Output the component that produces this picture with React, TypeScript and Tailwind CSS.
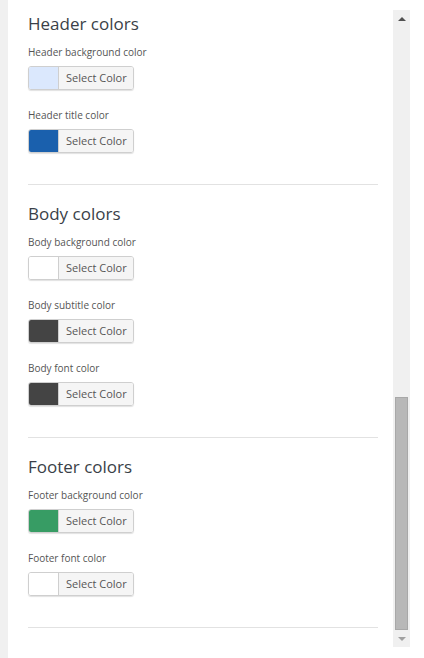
import React from "react";

type Field = { label: string; color: string };
type Section = { title: string; fields: Field[] };

const sections: Section[] = [
  {
    title: "Header colors",
    fields: [
      { label: "Header background color", color: "#dbe8fd" },
      { label: "Header title color", color: "#1a60ad" },
    ],
  },
  {
    title: "Body colors",
    fields: [
      { label: "Body background color", color: "#ffffff" },
      { label: "Body subtitle color", color: "#444444" },
      { label: "Body font color", color: "#444444" },
    ],
  },
  {
    title: "Footer colors",
    fields: [
      { label: "Footer background color", color: "#379c64" },
      { label: "Footer font color", color: "#ffffff" },
    ],
  },
];

function ColorButton({ color }: { color: string }) {
  return (
    <div className="mt-[7px] flex h-6 w-[106px] overflow-hidden rounded-[3px] border border-[#cfcfcf] shadow-[0_1px_1px_rgba(0,0,0,0.12)]">
      <div className="w-[30px] border-r border-[#cfcfcf]" style={{ backgroundColor: color }} />
      <div className="flex flex-1 items-center bg-[#f5f5f5] pl-[7px] text-[11px] text-[#555]">
        Select Color
      </div>
    </div>
  );
}

export default function App() {
  return (
    <div
      className="flex h-[658px] w-[424px] bg-white"
      style={{ fontFamily: '"Open Sans", sans-serif' }}
    >
      {/* left strip */}
      <div className="w-2 bg-[#f0f0f0]" />

      {/* settings content */}
      <div className="flex-1 pl-5 pr-[15px] pt-[11px]">
        {sections.map((s, i) => (
          <div key={s.title}>
            <h2
              className={`pt-px text-[17px] leading-6 text-[#3a3f48] ${i === 0 ? "" : "mt-[16px]"}`}
            >
              {s.title}
            </h2>
            {s.fields.map((f, j) => (
              <div key={f.label} className={j === 0 ? "mt-[9px]" : "mt-[18px]"}>
                <div className="text-[10px] leading-[14px] text-[#555]">{f.label}</div>
                <ColorButton color={f.color} />
              </div>
            ))}
            <div className="mt-[31px] h-px bg-[#e2e2e2]" />
          </div>
        ))}
      </div>

      {/* scrollbar */}
      <div className="mt-[10px] flex h-[637px] w-[17px] flex-col items-center bg-[#f0f0f0]">
        <div className="flex h-[17px] items-center justify-center">
          <div className="h-0 w-0 border-x-[4px] border-b-[4px] border-x-transparent border-b-[#505050]" />
        </div>
        <div className="flex-1 w-full" />
        <div className="h-[233px] w-[13px] border border-[#a8a8a8] bg-[#b8b8b8]" />
        <div className="flex h-[17px] items-center justify-center">
          <div className="h-0 w-0 border-x-[4px] border-t-[4px] border-x-transparent border-t-[#a0a0a0]" />
        </div>
      </div>
      <div className="w-[14px]" />
    </div>
  );
}
